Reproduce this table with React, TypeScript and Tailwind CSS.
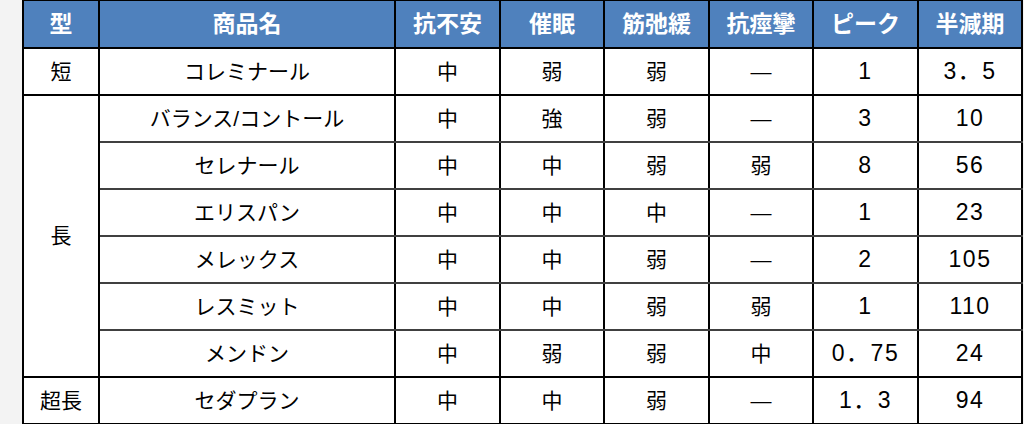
const headers = ["型", "商品名", "抗不安", "催眠", "筋弛緩", "抗痙攣", "ピーク", "半減期"];

// rows: type appears only on the first row of its rowspan group
const rows: { type?: string; span?: number; name: string; vals: string[]; last?: boolean }[] = [
  { type: "短", span: 1, name: "コレミナール", vals: ["中", "弱", "弱", "—", "1", "3．5"], last: true },
  { type: "長", span: 6, name: "バランス/コントール", vals: ["中", "強", "弱", "—", "3", "10"] },
  { name: "セレナール", vals: ["中", "中", "弱", "弱", "8", "56"] },
  { name: "エリスパン", vals: ["中", "中", "中", "—", "1", "23"] },
  { name: "メレックス", vals: ["中", "中", "弱", "—", "2", "105"] },
  { name: "レスミット", vals: ["中", "中", "弱", "弱", "1", "110"] },
  { name: "メンドン", vals: ["中", "弱", "弱", "中", "0．75", "24"], last: true },
  { type: "超長", span: 1, name: "セダプラン", vals: ["中", "中", "弱", "—", "1．3", "94"], last: true },
];

const widths = ["w-[76px]", "w-[296px]", "w-[105px]", "w-[104px]", "w-[105px]", "w-[104px]", "w-[105px]", "w-[104px]"];

export default function App() {
  return (
    <div
      className="h-[424px] w-[1024px] overflow-hidden bg-[#f3f3f3]"
      style={{ fontFamily: '"Liberation Sans", "Noto Sans CJK JP", sans-serif' }}
    >
      <table className="ml-[22px] mt-[-1px] w-[999px] table-fixed border-collapse border-2 border-black bg-white text-[21px] text-black">
        <colgroup>
          {widths.map((w, i) => (
            <col key={i} className={w} />
          ))}
        </colgroup>
        <thead>
          <tr className="h-[48px] bg-[#4f81bd]">
            {headers.map((h) => (
              <th key={h} className="border-2 border-black text-center text-[23px] font-bold text-white">
                {h}
              </th>
            ))}
          </tr>
        </thead>
        <tbody>
          {rows.map((r) => {
            const edge = `border-x-2 border-t-2 border-b-2 border-x-black text-center ${
              r.last ? "border-b-black" : "border-b-[#404040]"
            } ${r.type ? "border-t-black" : "border-t-[#404040]"}`;
            return (
              <tr key={r.name} className="h-[47px]">
                {r.type && (
                  <td rowSpan={r.span} className="border-2 border-black text-center">
                    {r.type}
                  </td>
                )}
                <td className={edge}>{r.name}</td>
                {r.vals.map((v, i) => (
                  <td key={i} className={`${edge} ${i >= 4 ? "text-[23px] tracking-[1.5px]" : ""}`}>
                    {v}
                  </td>
                ))}
              </tr>
            );
          })}
        </tbody>
      </table>
    </div>
  );
}
